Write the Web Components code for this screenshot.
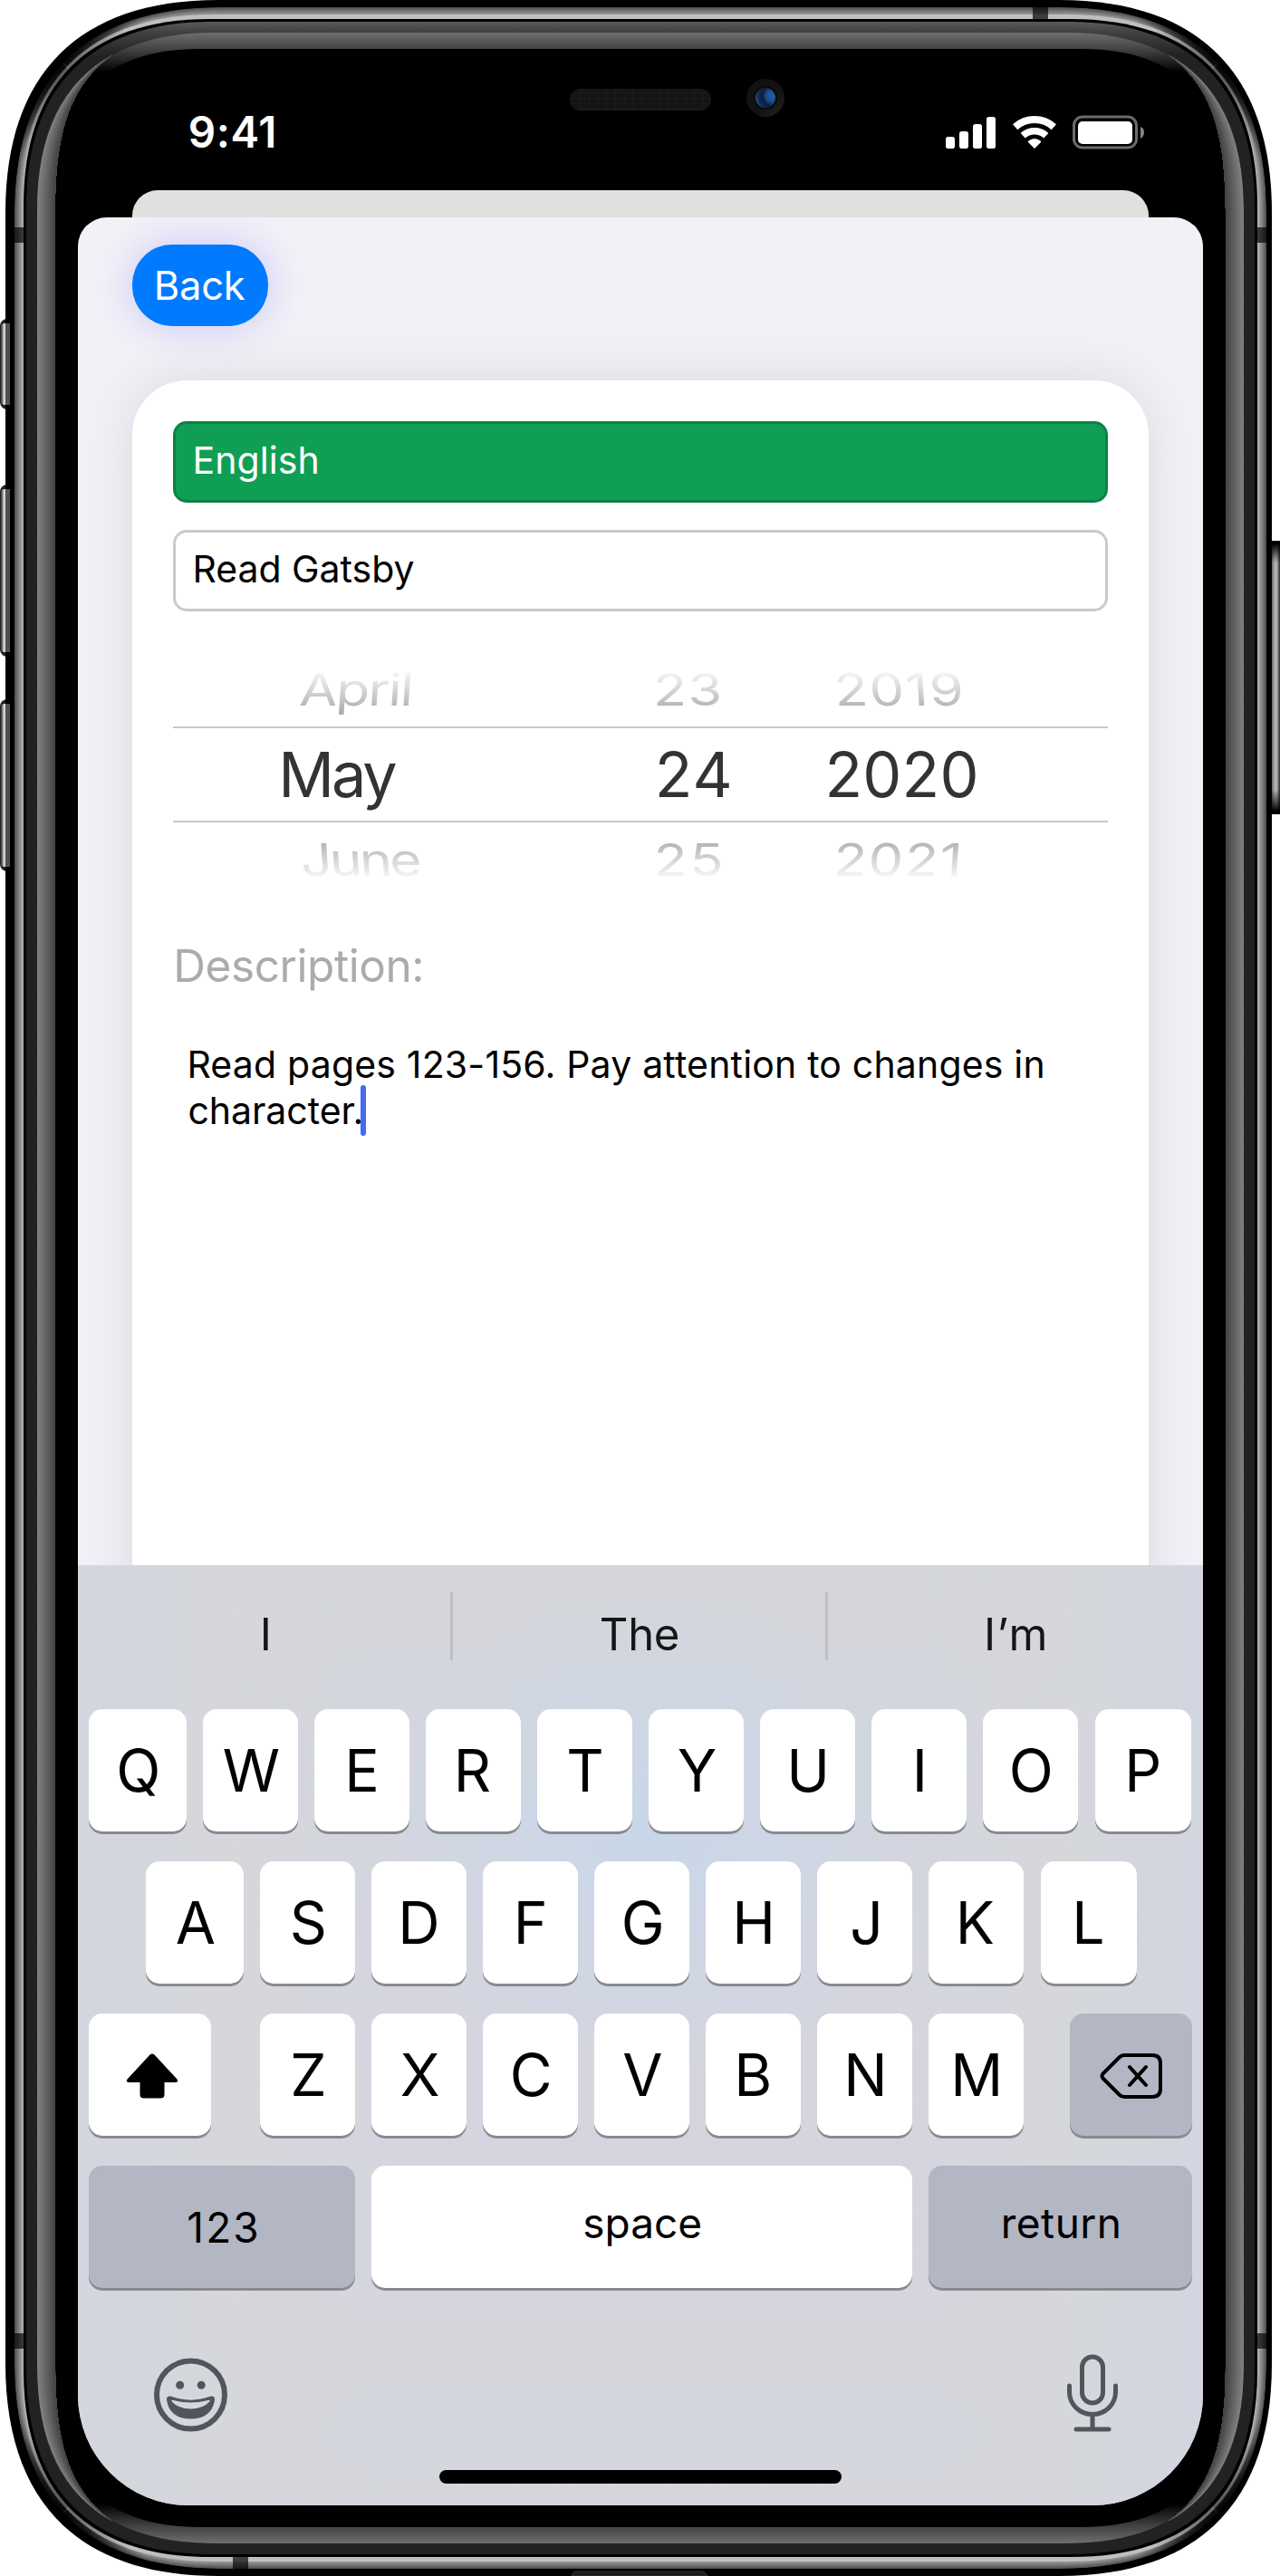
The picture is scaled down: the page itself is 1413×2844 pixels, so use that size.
<!DOCTYPE html>
<html lang="en">
<head>
<meta charset="utf-8">
<title>Edit assignment</title>
<style>
  body { margin: 0; background: #fff; font-family: Inter, "Liberation Sans", sans-serif; }
</style>
</head>
<body>
<phone-shell>
  <status-bar></status-bar>
  <modal-sheet>
    <pill-button>Back</pill-button>
    <form-card>
      <text-field w="135" tone="green">English</text-field>
      <text-field w="241">Read Gatsby</text-field>
      <date-wheel></date-wheel>
      <notes-area></notes-area>
    </form-card>
  </modal-sheet>
  <soft-keyboard></soft-keyboard>
</phone-shell>

<script>
const attach = (el, html) => { el.attachShadow({ mode: 'open' }).innerHTML = html; };
const ctx = document.createElement('canvas').getContext('2d');

/* Text whose box is its ink: tracking is adjusted so that it spans the given width. */
class FitText extends HTMLElement {
  connectedCallback() {
    if (!this.shadowRoot) attach(this, `<style>:host{display:inline-block;white-space:nowrap;flex:none}</style><slot></slot>`);
    const cs = getComputedStyle(this), text = this.textContent, w = +this.getAttribute('w');
    ctx.font = `${cs.fontWeight} ${cs.fontSize} ${cs.fontFamily}`;
    const m = ctx.measureText(text);
    const ink = m.actualBoundingBoxLeft + m.actualBoundingBoxRight;
    const target = w || ink;
    if (text.length > 1) this.style.letterSpacing = ((target - ink) / (text.length - 1)).toFixed(3) + 'px';
    this.style.textIndent = (m.actualBoundingBoxLeft + 0.8) + 'px';
    this.style.width = target + 'px';
  }
}

/* Rounded rectangle with continuous corners. */
function squircle(x0, y0, x1, y1, r) {
  const e = r * 1.15, q = e * (1 - 0.654);
  return `M${x0} ${y0 + e}C${x0} ${y0 + q} ${x0 + q} ${y0} ${x0 + e} ${y0}L${x1 - e} ${y0}C${x1 - q} ${y0} ${x1} ${y0 + q} ${x1} ${y0 + e}` +
         `L${x1} ${y1 - e}C${x1} ${y1 - q} ${x1 - q} ${y1} ${x1 - e} ${y1}L${x0 + e} ${y1}C${x0 + q} ${y1} ${x0} ${y1 - q} ${x0} ${y1 - e}Z`;
}
const lerp = (a, b, t) => a + (b - a) * t;
const grey = v => { v = Math.round(v); return `rgb(${v},${v - 1},${v - 1})`; };

class DeviceFrame extends HTMLElement {
  constructor() {
    super();
    const rings = (shade, from, to) => {
      let s = '';
      for (let i = 0; i < 13; i++) {
        const t = i / 13;
        if (t < from || t >= to) continue;
        s += `<path fill="${grey(shade(t))}" d="${squircle(lerp(16, 26, t), lerp(8, 21, t), lerp(1398, 1388, t), lerp(2836, 2823, t), lerp(197, 179, t))}"/>`;
      }
      return s;
    };
    const side = t => lerp(82, 190, t), cap = t => t < 0.6 ? lerp(82, 158, t / 0.6) : 192;
    const blobs = (r, op) => [[60, 68], [1354, 68], [60, 2776], [1354, 2776]]
      .map(([x, y]) => `<circle cx="${x}" cy="${y}" r="${r}" fill="url(#dk)" opacity="${op}"/>`).join('');
    const zone = (clip, shade) => `<g clip-path="url(#${clip})">${rings(shade, 0, 0.6)}${blobs(110, 1)}${rings(shade, 0.6, 1)}${blobs(90, 0.55)}</g>`;

    let horn = '';
    const A = [41, 231, 41, 147.8, 69.3, 90.4], B = [61, 231, 61, 140, 80, 92];
    for (let i = 0; i < 20; i++) {
      const c = A.map((v, k) => lerp(v, B[k], i / 20));
      horn += `<path fill="${grey(lerp(130, 66, i / 20))}" d="M${c[0]} ${c[1]}C${c[2]} ${c[3]} ${c[4]} ${c[5]} 124.3 60.4C80 92 61 140 61 231Z"/>`;
    }
    const half = `${horn}<rect x="41" y="230.5" width="20" height="1192" fill="url(#rail)"/>`;
    const leftBtn = (y, h) => `<rect x="0" y="${y}" width="20" height="${h}" rx="8" fill="#222"/><rect x="1" y="${y + 5}" width="15" height="${h - 10}" rx="4" fill="url(#btn)"/>`;

    attach(this, `<style>:host{display:block}svg{display:block}</style>
<svg width="1413" height="2844" viewBox="0 0 1413 2844">
<defs>
  <linearGradient id="btn" gradientUnits="userSpaceOnUse" x1="0" x2="11" y1="0" y2="0"><stop offset=".08" stop-color="#333"/><stop offset=".28" stop-color="#8d8d8d"/><stop offset=".42" stop-color="#e2e2e2"/><stop offset=".6" stop-color="#b0b0b0"/><stop offset="1" stop-color="#6c6c6c"/></linearGradient>
  <linearGradient id="pow" gradientUnits="userSpaceOnUse" x1="1403" x2="1413" y1="0" y2="0"><stop offset="0" stop-color="#444"/><stop offset=".3" stop-color="#999"/><stop offset=".6" stop-color="#bbb"/><stop offset=".85" stop-color="#666"/><stop offset="1" stop-color="#222"/></linearGradient>
  <linearGradient id="powfade" x1="0" x2="0" y1="0" y2="1"><stop offset=".01" stop-color="#000"/><stop offset=".08" stop-color="#000" stop-opacity="0"/><stop offset=".91" stop-color="#000" stop-opacity="0"/><stop offset=".99" stop-color="#000"/></linearGradient>
  <radialGradient id="dk"><stop offset="0" stop-color="#000" stop-opacity=".92"/><stop offset=".35" stop-color="#000" stop-opacity=".7"/><stop offset="1" stop-color="#000" stop-opacity="0"/></radialGradient>
  <linearGradient id="lip" gradientUnits="userSpaceOnUse" x1="0" x2="0" y1="24" y2="62"><stop offset="0" stop-color="#5a5a5a"/><stop offset=".32" stop-color="#404040"/><stop offset="1" stop-color="#222"/></linearGradient>
  <linearGradient id="bev" gradientUnits="userSpaceOnUse" x1="0" x2="0" y1="36" y2="80"><stop offset="0" stop-color="#6e6e6e"/><stop offset=".41" stop-color="#444"/><stop offset="1" stop-color="#000"/></linearGradient>
  <linearGradient id="rail" gradientUnits="userSpaceOnUse" x1="41" x2="61" y1="0" y2="0"><stop offset="0" stop-color="#838383"/><stop offset="1" stop-color="#414141"/></linearGradient>
  <radialGradient id="lens" cx=".85" cy=".4" r=".85"><stop offset="0" stop-color="#1e62a8"/><stop offset=".35" stop-color="#1c4f90"/><stop offset=".6" stop-color="#0c1c3c"/><stop offset=".85" stop-color="#122d5c"/><stop offset="1" stop-color="#24568c"/></radialGradient>
  <linearGradient id="cam" x1="0" y1="0" x2="1" y2="1"><stop offset=".6" stop-color="#121212"/><stop offset="1" stop-color="#262626"/></linearGradient>
  <pattern id="mesh" width="9.7" height="6" patternUnits="userSpaceOnUse"><rect width="9.7" height="6" fill="#141414"/><path d="M0 0V6M0 0H9.7" stroke="#1d1d1d" stroke-width="1.6"/></pattern>
  <clipPath id="metal"><path d="${squircle(16, 8, 1398, 2836, 197)}"/></clipPath>
  <clipPath id="sides"><path d="M0 0L220 220V2624L0 2844ZM1414 0L1194 220V2624L1414 2844Z"/></clipPath>
  <clipPath id="caps"><path d="M0 0H1414L1194 220H220ZM0 2844H1414L1194 2624H220Z"/></clipPath>
</defs>
${leftBtn(352, 100)}${leftBtn(535, 190)}${leftBtn(772, 190)}
<rect x="1396" y="597" width="26" height="302" rx="9"/><rect x="1403" y="600" width="14" height="296" rx="6" fill="url(#pow)"/><rect x="1403" y="597" width="14" height="302" rx="9" fill="url(#powfade)"/>
<path d="${squircle(6, 0, 1404, 2844, 204)}"/>
<rect x="6" y="357" width="5" height="90" fill="#6c6c6c" opacity=".75"/><rect x="6" y="540" width="5" height="180" fill="#6c6c6c" opacity=".75"/><rect x="6" y="777" width="5" height="180" fill="#6c6c6c" opacity=".75"/>
<g clip-path="url(#metal)">${zone('sides', side)}${zone('caps', cap)}</g>
<g fill="#000" opacity=".68"><path d="M16 251h10v17H16zM1388 251h10v17h-10zM16 2576h10v17H16zM1388 2576h10v17h-10zM1140 8h17v13h-17zM257 2823h17v13h-17z"/></g>
<path d="${squircle(26, 21, 1388, 2823, 179)}"/>
<path fill="url(#lip)" d="${squircle(29, 24, 1385, 2820, 178)}"/>
<path fill="url(#bev)" d="${squircle(41, 36, 1373, 2808, 170)}"/>
<g transform="matrix(1 0 0 -1 0 2844)"><clipPath id="lower"><rect x="0" y="0" width="1414" height="300"/></clipPath><path clip-path="url(#lower)" fill="url(#bev)" d="${squircle(41, 36, 1373, 2808, 170)}"/></g>
<path d="${squircle(61, 54, 1353, 2790, 138)}"/>
<g>${half}</g>
<g transform="matrix(-1 0 0 1 1414 0)">${half}</g>
<g transform="matrix(1 0 0 -1 0 2844)">${half}</g>
<g transform="matrix(-1 0 0 -1 1414 2844)">${half}</g>
<rect x="629.5" y="98.500" width="155" height="23" rx="11.500" fill="url(#mesh)" stroke="#1a1a1a"/>
<circle cx="845" cy="108" r="21" fill="url(#cam)"/><circle cx="845" cy="108" r="13" fill="#0a0a0a"/><circle cx="845" cy="108" r="11" fill="url(#lens)"/>
<path d="M631 2844q1-5 7-5h135q6 0 8 5z" fill="#1b1b1b" stroke="#3a3a3a"/>
</svg>`);
  }
}

class PhoneShell extends HTMLElement {
  constructor() {
    super();
    attach(this, `<style>
      :host{display:grid;width:1413px;height:2844px;overflow:hidden}
      device-frame,main{grid-area:1/1}
      main{z-index:1;display:flex;flex-direction:column;width:1242px;height:2766px;margin-left:86px;border-radius:0 0 122px 122px;overflow:hidden}
    </style><device-frame></device-frame><main><slot></slot></main>`);
  }
}

class StatusBar extends HTMLElement {
  constructor() {
    super();
    attach(this, `<style>
      :host{display:flex;flex:none;box-sizing:border-box;height:210px;padding:116px 64px 34px 123px;justify-content:space-between;align-items:center;color:#fff}
      fit-text{font-size:47.500px;font-weight:600;line-height:60px}
      div{display:flex;gap:18.500px;height:38px}svg{display:block;flex:none}
    </style>
    <fit-text w="92.500">9:41</fit-text>
    <div>
      <svg width="55" height="38" fill="#fff"><rect y="24" width="10" height="13" rx="2.800"/><rect x="15" y="18" width="10" height="19" rx="2.800"/><rect x="30" y="10" width="10" height="27" rx="2.800"/><rect x="45" y="2" width="10" height="35" rx="2.800"/></svg>
      <svg width="48" height="38" viewBox="0 0 48 38" fill="none" stroke="#fff"><path d="M2.600 13.200A32 32 0 0 1 45.400 13.200" stroke-width="8"/><path d="M11.200 22.700A19 19 0 0 1 36.800 22.700" stroke-width="7.600"/><path d="M24 37L17 30Q16.300 29.200 17.300 28.500Q24 23.500 30.700 28.500Q31.700 29.200 31 30Z" fill="#fff" stroke="none"/></svg>
      <svg width="80" height="38" viewBox="0 0 80 38"><rect x="1.500" y="2" width="69" height="34" rx="9.500" fill="none" stroke="#6b6b6b" stroke-width="3"/><rect x="6" y="7" width="60" height="25" rx="5" fill="#fff"/><path d="M75 13Q79 14.500 79 19T75 26Z" fill="#858585"/></svg>
    </div>`);
  }
}

class ModalSheet extends HTMLElement {
  constructor() {
    super();
    attach(this, `<style>
      :host{display:flex;flex-direction:column;flex:none;height:1518px}
      .behind{flex:none;height:30px;margin:0 60px;background:#e0e0e0;border-radius:28px 28px 0 0}
      .sheet{flex:1;min-height:0;display:flex;flex-direction:column;align-items:flex-start;gap:60px;padding:30px 60px 0;background:#f2f1f7;border-radius:32px 32px 0 0;overflow:hidden}
    </style><div class="behind"></div><div class="sheet"><slot></slot></div>`);
  }
}

class PillButton extends HTMLElement {
  constructor() {
    super();
    attach(this, `<style>
      :host{display:flex;flex:none;width:150px;height:90px;align-items:center;justify-content:center;border-radius:44px;background:#007aff;color:#fff;font-size:43.500px;line-height:60px;box-shadow:0 0 44px rgba(40,30,255,.2)}
    </style><fit-text w="98">${this.textContent}</fit-text>`);
  }
}

class FormCard extends HTMLElement {
  constructor() {
    super();
    attach(this, `<style>
      :host{display:flex;flex:none;flex-direction:column;box-sizing:border-box;width:1122px;height:1500px;padding:45px;background:#fff;border-radius:60px;box-shadow:0 0 60px rgba(0,0,0,.1)}
    </style><slot></slot>`);
  }
}

class TextField extends HTMLElement {
  constructor() {
    super();
    attach(this, `<style>
      :host{display:flex;flex:none;box-sizing:border-box;height:90px;margin-bottom:30px;padding:0 20.600px 4px;align-items:center;border:3px solid #cacacb;border-radius:15px;background:#fff;color:#000;font-size:41px;line-height:60px}
      :host([tone=green]){background:#109e54;border-color:#0b8244;color:#fff}
    </style><fit-text w="${this.getAttribute('w')}">${this.textContent}</fit-text>`);
  }
}

class DateWheel extends HTMLElement {
  constructor() {
    super();
    attach(this, `<style>
      :host{display:block;flex:none;margin-top:15px}
      div{display:flex;align-items:center;box-sizing:border-box;height:82px;font-size:61px;line-height:82px;color:#a3a3a3}
      .now{height:106px;border:solid #c9c9c9;border-width:2px 0;font-size:68.300px;color:#333}
      .prev{-webkit-mask-image:linear-gradient(transparent 20%,#000 88%);mask-image:linear-gradient(transparent 20%,#000 88%)}
      .next{-webkit-mask-image:linear-gradient(#000 15%,transparent 80%);mask-image:linear-gradient(#000 15%,transparent 80%)}
    </style>
    <div class="prev">
      <fit-text w="121" style="margin-left:140px;transform:scaleY(.81) skewX(-3deg)">April</fit-text>
      <fit-text w="69.500" style="margin-left:272.100px;transform:scaleY(.81)">23</fit-text>
      <fit-text w="136" style="margin-left:130px;transform:scaleY(.81) skewX(3deg)">2019</fit-text>
    </div>
    <div class="now">
      <fit-text w="124" style="margin-left:121.500px">May</fit-text>
      <fit-text w="77.600" style="margin-left:290.500px">24</fit-text>
      <fit-text w="162" style="margin-left:110px">2020</fit-text>
    </div>
    <div class="next">
      <fit-text w="129" style="margin-left:142px;transform:scaleY(.81) skewX(3deg)">June</fit-text>
      <fit-text w="70" style="margin-left:262.600px;transform:scaleY(.81)">25</fit-text>
      <fit-text w="133.500" style="margin-left:128px;transform:scaleY(.81) skewX(-3deg)">2021</fit-text>
    </div>`);
  }
}

class NotesArea extends HTMLElement {
  constructor() {
    super();
    attach(this, `<style>
      :host{display:flex;flex-direction:column;padding-top:46px}
      .label{font-size:49.500px;line-height:60px;height:60px;color:#ababab;padding-left:3.500px}
      .body{display:flex;flex-direction:column;margin-top:54px;padding-left:17.600px;font-size:41px;line-height:50.500px;color:#000}
      .row{display:flex;height:50.500px;align-items:center}
      i{flex:none;width:6px;height:56px;margin-left:0;border-radius:3px;background:#446af0}
    </style>
    <div class="label"><fit-text w="270">Description:</fit-text></div>
    <div class="body">
      <div class="row"><fit-text w="942">Read pages 123-156. Pay attention to changes in</fit-text></div>
      <div class="row"><fit-text w="189">character.</fit-text><i></i></div>
    </div>`);
  }
}

class KeyCap extends HTMLElement {
  constructor() {
    super();
    attach(this, `<style>
      :host{display:flex;flex:none;width:105px;height:135px;box-sizing:border-box;align-items:center;justify-content:center;border-radius:15px;background:#fff;box-shadow:0 3px 0 #898a8e;color:#000;font-size:64.200px;line-height:80px}
      :host([tone=dark]){background:#b3b6c3}
      :host([word]){font-size:46px}
      :host([word=low]){padding-bottom:9px}
    </style><slot></slot>`);
  }
}

class SoftKeyboard extends HTMLElement {
  constructor() {
    super();
    const caps = (s, first, last) => [...s].map((c, i) =>
      `<key-cap${i === 0 && first ? ` style="width:${first}px"` : i === s.length - 1 && last ? ` style="width:${last}px;margin-left:1px"` : ''}><fit-text>${c}</fit-text></key-cap>`).join('');
    attach(this, `<style>
      :host{display:flex;flex:none;flex-direction:column;height:1038px;background:
        radial-gradient(ellipse 300px 270px at 51% 300px,#c8d7e9 0,rgba(202,215,232,.7) 35%,rgba(210,214,224,0) 100%),
        linear-gradient(90deg,#d4d6e0 0,#d5d7db 14%,rgba(213,214,222,0) 28%,rgba(213,214,222,0) 74%,#d5d7db 88%,#d2d6e0 100%),
        linear-gradient(#d5d6da 0,#d3d6df 20%,#d5d5df 50%,#d5d5df 76%,#d5d7db 82%,#d4d6de 92%,#d5d7dc 100%)}
      .hints{display:flex;height:159px;box-sizing:border-box}
      .hints span{flex:none;width:411px;display:flex;justify-content:center;box-sizing:border-box;font-size:49px;line-height:60px;padding-top:47px;color:#161616}
      .hints span:last-child{width:414px}
      .hints b{width:3px;height:75px;margin-top:30px;background:#bfc0c5}
      .row{display:flex;gap:18px;height:135px;margin:0 0 33px 12px}
      .two{margin-left:75px}
      .foot{display:flex;justify-content:space-between;height:90px;padding:0 92px 0 84px;margin-top:39.500px}
      .home{width:444px;height:15px;margin:38px 0 0 399px;border-radius:8px;background:#000}
      svg{display:block}
    </style>
    <div class="hints"><span style="padding-left:2px"><fit-text>I</fit-text></span><b></b><span><fit-text w="85">The</fit-text></span><b></b><span><fit-text w="63.500">I’m</fit-text></span></div>
    <div class="row">${caps('QWERTYUIOP', 108, 106)}</div>
    <div class="row two">${caps('ASDFGHJKL', 108, 106)}</div>
    <div class="row">
      <key-cap style="width:135px;margin-right:36px"><svg width="58" height="50" viewBox="0 0 58 50" style="margin-left:4px;margin-top:3px"><path d="M26.500 1.600Q29 -.8 31.500 1.600L56.500 28.500Q58.500 32 55 32H42.500V45.500Q42.500 49.500 38.500 49.500H19.500Q15.500 49.500 15.500 45.500V32H3Q-.5 32 1.500 28.500Z"/></svg></key-cap>
      ${caps('ZXCVBNM')}
      <key-cap tone="dark" style="width:135px;margin-left:33px"><svg width="70" height="52" viewBox="0 0 70 52" fill="none" stroke="#000" stroke-width="4" stroke-linecap="round" stroke-linejoin="round" style="margin-top:3px"><path d="M27 3H58Q67 3 67 12V40Q67 49 58 49H27Q24 49 21.500 46.500L3.500 28.500Q1.500 26 3.500 23.500L21.500 5.500Q24 3 27 3Z"/><path d="M33 16L51 36M51 16L33 36"/></svg></key-cap>
    </div>
    <div class="row">
      <key-cap tone="dark" word style="width:294px"><fit-text w="75">123</fit-text></key-cap>
      <key-cap word="low" style="width:597px"><fit-text w="128">space</fit-text></key-cap>
      <key-cap tone="dark" word="low" style="width:291px"><fit-text w="127">return</fit-text></key-cap>
    </div>
    <div class="foot">
      <svg width="82" height="90" viewBox="0 0 82 90" style="margin-top:4.500px"><circle cx="40.500" cy="41" r="37.500" fill="none" stroke="#51565d" stroke-width="6"/><circle cx="28.700" cy="30.300" r="4.500" fill="#51565d"/><circle cx="52.200" cy="30.300" r="4.500" fill="#51565d"/><path fill="#51565d" fill-rule="evenodd" d="M18.500 42.600Q29 46.700 40.500 46.700T62.500 42.600Q67.500 42 67 47Q63.500 67.500 40.500 67.500T14 47Q13.500 42 18.500 42.600ZM20 46.800Q18.800 46.700 19.500 48.200Q27 56.500 40.500 56.500T61.500 48.200Q62.200 46.700 61 46.800Q51 49.500 40.500 49.500T20 46.800Z"/></svg>
      <svg width="64" height="90" viewBox="0 0 64 90" fill="none" stroke="#51565d" stroke-width="5" stroke-linecap="round"><rect x="22.500" y="3" width="23" height="51" rx="11.500"/><path d="M8.500 35V42A25.500 24.500 0 0 0 59.500 42V35M34 67V83M16 83H52"/></svg>
    </div>
    <div class="home"></div>`);
  }
}

customElements.define('fit-text', FitText);
customElements.define('device-frame', DeviceFrame);
customElements.define('phone-shell', PhoneShell);
customElements.define('status-bar', StatusBar);
customElements.define('modal-sheet', ModalSheet);
customElements.define('pill-button', PillButton);
customElements.define('form-card', FormCard);
customElements.define('text-field', TextField);
customElements.define('date-wheel', DateWheel);
customElements.define('notes-area', NotesArea);
customElements.define('key-cap', KeyCap);
customElements.define('soft-keyboard', SoftKeyboard);
</script>
</body>
</html>
